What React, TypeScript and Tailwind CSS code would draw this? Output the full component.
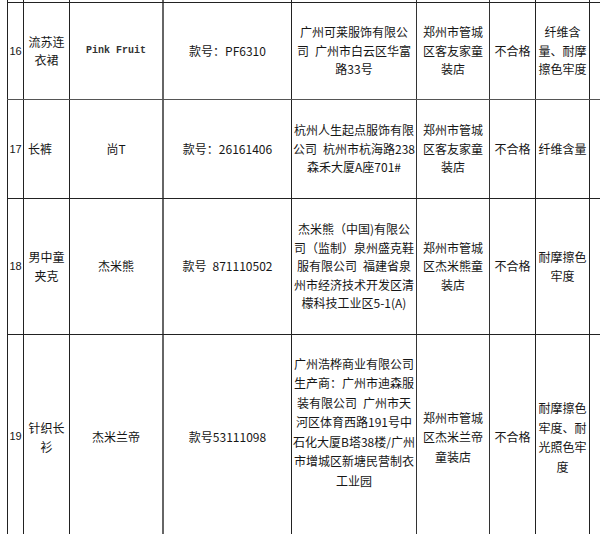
import React from 'react'

type Row = {
  h: string
  no: string
  name: string[]
  nameAlign?: string
  brand: string
  brandClass?: string
  model: string
  maker: string[]
  makerClass?: string
  shop: string[]
  result: string
  item: string[]
  lead?: string
}

// en space keeps the wide gaps of the original sheet
const sp = '\u2002'

const rows: Row[] = [
  {
    h: 'h-[97px] border-b-[#555]',
    no: '16',
    name: ['流苏连', '衣裙'],
    brand: 'Pink Fruit',
    brandClass: 'font-["Liberation_Mono",monospace] text-[10px] font-semibold text-[#333]',
    model: '款号：PF6310',
    maker: ['广州可莱服饰有限公', `司${sp}广州市白云区华富`, '路33号'],
    shop: ['郑州市管城', '区客友家童', '装店'],
    result: '不合格',
    item: ['纤维含', '量、耐摩', '擦色牢度'],
  },
  {
    h: 'h-[99px]',
    no: '17',
    name: ['长裤'],
    nameAlign: 'justify-start pl-[4px]',
    brand: '尚T',
    model: '款号：26161406',
    maker: ['杭州人生起点服饰有限', `公司${sp}杭州市杭海路238`, '森禾大厦A座701#'],
    shop: ['郑州市管城', '区客友家童', '装店'],
    result: '不合格',
    item: ['纤维含量'],
  },
  {
    h: 'h-[136px]',
    no: '18',
    name: ['男中童', '夹克'],
    brand: '杰米熊',
    model: `款号${sp}871110502`,
    maker: [
      '杰米熊（中国)有限公',
      '司（监制）泉州盛克鞋',
      `服有限公司${sp}福建省泉`,
      '州市经济技术开发区清',
      '檬科技工业区5-1(A)',
    ],
    shop: ['郑州市管城', '区杰米熊童', '装店'],
    result: '不合格',
    item: ['耐摩擦色', '牢度'],
  },
  {
    h: 'h-[204px] border-b-0',
    no: '19',
    name: ['针织长', '衫'],
    brand: '杰米兰帝',
    model: '款号53111098',
    maker: [
      '广州浩桦商业有限公司',
      '生产商：广州市迪森服',
      `装有限公司${sp}广州市天`,
      '河区体育西路191号中',
      '石化大厦B塔38楼/广州',
      '市增城区新塘民营制衣',
      '工业园',
    ],
    makerClass: 'pb-[30px]',
    shop: ['郑州市管城', '区杰米兰帝', '童装店'],
    result: '不合格',
    item: ['耐摩擦色', '牢度、耐', '光照色牢', '度'],
    lead: 'leading-[19.5px]',
  },
]

function Lines({ lines }: { lines: string[] }) {
  return (
    <div className="flex flex-col items-center">
      {lines.map((l, i) => (
        <div key={i} className="whitespace-nowrap">
          {l}
        </div>
      ))}
    </div>
  )
}

export default function App() {
  const cell = 'flex items-center justify-center text-center border-r border-[#222] shrink-0'
  return (
    <div className='w-[600px] h-[534px] overflow-hidden bg-white pl-[7px] text-[12px] leading-[18.5px] text-[#161616] font-["Noto_Sans_CJK_SC","Liberation_Sans",sans-serif]'>
      {/* cropped row above */}
      <div className="flex h-[3px] border-b border-[#222]">
        <div className="w-[17px] border-l border-r border-[#222]" />
        <div className="w-[46px] border-r border-[#222]" />
        <div className="w-[94px] border-r-2 border-[#666]" />
        <div className="w-[128px] border-r border-[#222]" />
        <div className="w-[125px] border-r border-[#333]" />
        <div className="w-[73px] border-r border-[#333]" />
        <div className="w-[46px] border-r border-[#222]" />
        <div className="w-[54px] border-r border-[#222]" />
      </div>

      {rows.map((r) => (
        <div key={r.no} className={`flex border-b border-[#222] ${r.h} ${r.lead ?? ''}`}>
          <div className={`${cell} w-[17px] border-l font-["Liberation_Sans",sans-serif] text-[11px]`}>
            {r.no}
          </div>
          <div className={`${cell} w-[46px] ${r.nameAlign ?? ''}`}>
            <Lines lines={r.name} />
          </div>
          <div className={`${cell} w-[94px] border-r-2 border-r-[#666] ${r.brandClass ?? ''}`}>
            {r.brand}
          </div>
          <div className={`${cell} w-[128px] whitespace-nowrap`}>{r.model}</div>
          <div className={`${cell} w-[125px] border-r-[#333] ${r.makerClass ?? ''}`}>
            <Lines lines={r.maker} />
          </div>
          <div className={`${cell} w-[73px] border-r-[#333]`}>
            <Lines lines={r.shop} />
          </div>
          <div className={`${cell} w-[46px]`}>{r.result}</div>
          <div className={`${cell} w-[54px]`}>
            <Lines lines={r.item} />
          </div>
        </div>
      ))}
    </div>
  )
}
